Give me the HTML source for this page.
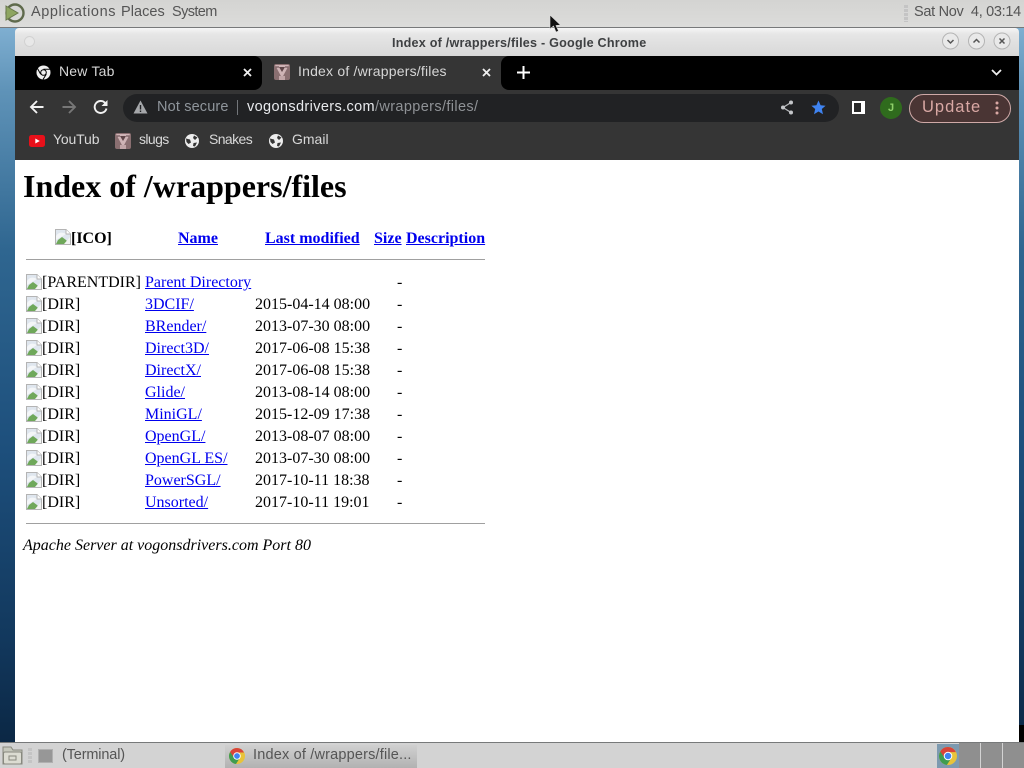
<!DOCTYPE html>
<html>
<head>
<meta charset="utf-8">
<title>Index of /wrappers/files</title>
<style>
html,body{margin:0;padding:0;width:1024px;height:768px;overflow:hidden;background:#1d4f7c}
#bg{position:absolute;left:0;top:0;width:1024px;height:768px;background:linear-gradient(180deg,#8dbbdc 0,#5f93b8 90px,#2f6690 250px,#1d4f7c 450px,#12385d 640px,#0b2744 745px)}
.a{position:absolute;white-space:nowrap}
.ui{font-family:"Liberation Sans",sans-serif}
.s{font-family:"Liberation Serif",serif;font-size:16px;line-height:22px;color:#000}
.l{color:#0000ee;text-decoration:underline}
.h{color:#d8d8d8;font-size:14px;line-height:18px}
svg{position:absolute;overflow:visible}
</style>
</head>
<body>
<div id="bg"></div>

<!-- top panel -->
<div class="a" style="left:0;top:0;width:1024px;height:27px;background:linear-gradient(180deg,#d4d4d2,#dcdcda);border-bottom:1px solid #77797a"></div>
<svg style="left:3px;top:2px" width="23" height="21" viewBox="0 0 23 21">
<circle cx="12" cy="11" r="8.500" fill="none" stroke="#5f6a4c" stroke-width="2.400"/>
<path d="M3 4L15 11L3 18Z" fill="#8ea561" stroke="#68784b" stroke-width="1"/>
</svg>
<div class="a ui" style="left:31px;top:3px;font-size:14.500px;line-height:18px;color:#555;letter-spacing:.57px">Applications</div>
<div class="a ui" style="left:121px;top:3px;font-size:14.500px;line-height:18px;color:#555;letter-spacing:.05px">Places</div>
<div class="a ui" style="left:172px;top:3px;font-size:14.500px;line-height:18px;color:#555;letter-spacing:-.6px">System</div>
<div class="a" style="left:904px;top:5px;width:4px;height:17px;background:repeating-linear-gradient(180deg,#c4c4c4 0,#c4c4c4 3px,#d8d8d8 3px,#d8d8d8 4px)"></div>
<div class="a ui" style="left:914px;top:3px;font-size:14.500px;line-height:18px;color:#555;letter-spacing:-.3px">Sat Nov&nbsp; 4, 03:14</div>

<!-- cursor -->
<svg style="left:549px;top:14px;z-index:5" width="13" height="20" viewBox="0 0 13 20">
<path d="M1 1L1 15L4.500 12L7 18L9.500 17L7 11.500L11.500 11Z" fill="#111" stroke="#ddd" stroke-width=".6"/>
</svg>

<!-- window -->
<div class="a" style="left:15px;top:28px;width:1004px;height:28px;background:linear-gradient(180deg,#f6f6f6 0,#e6e6e6 6px,#d8d8d8 28px);border-radius:4px 4px 0 0"></div>
<div class="a" style="left:24px;top:36px;width:11px;height:11px;border-radius:50%;background:#e8e8e8;border:1px solid #d2d2d2;box-sizing:border-box"></div>
<div class="a ui" style="left:392px;top:34px;font-size:12.600px;font-weight:bold;line-height:18px;color:#3e4042;letter-spacing:.22px">Index of /wrappers/files - Google Chrome</div>
<svg style="left:940px;top:31px" width="72" height="20" viewBox="0 0 72 20">
<g fill="#e9e9e9" stroke="#b4b4b4"><circle cx="10.500" cy="10" r="8"/><circle cx="36.500" cy="10" r="8"/><circle cx="62" cy="10" r="8"/></g>
<g fill="none" stroke="#555" stroke-width="1.500"><path d="M7.500 9L10.500 12L13.500 9"/><path d="M33.500 11.500L36.500 8.500L39.500 11.500"/><path d="M59.500 7.500L64.500 12.500M64.500 7.500L59.500 12.500"/></g>
</svg>

<!-- tab strip -->
<div class="a" style="left:15px;top:56px;width:1004px;height:34px;background:#353535"></div>
<div class="a" style="left:15px;top:56px;width:247px;height:34px;background:#000;border-radius:0 8px 8px 0"></div>
<div class="a" style="left:501px;top:56px;width:518px;height:34px;background:#000;border-radius:8px 0 0 8px"></div>
<svg style="left:36px;top:65px" width="15" height="15" viewBox="0 0 15 15">
<circle cx="7.500" cy="7.500" r="7" fill="#f0f0f0"/><circle cx="7.500" cy="7.500" r="3.300" fill="#000"/><circle cx="7.500" cy="7.500" r="2.300" fill="#f0f0f0"/>
<path d="M7.500 4.200H14M4.700 9.200L1.500 3.500M10.300 9.200L7 14.500" stroke="#000" stroke-width="1"/>
</svg>
<div class="a ui" style="left:59px;top:62px;font-size:14px;line-height:18px;color:#d6d6d6;letter-spacing:.2px">New Tab</div>
<svg style="left:243px;top:68px" width="9" height="9" viewBox="0 0 9 9"><path d="M1 1L8 8M8 1L1 8" stroke="#f0f0f0" stroke-width="1.800"/></svg>

<svg style="left:274px;top:64px" width="16" height="16" viewBox="0 0 16 16">
<rect width="16" height="16" rx="2" fill="#8a6f71"/><path d="M1 1L8 14L15 1Z" fill="#cfb4b6"/><path d="M5 3L8 8L11 3Z" fill="#5f4649"/><path d="M2 3H5M11 3H14" stroke="#5f4649"/><rect x="5" y="12" width="6" height="4" fill="#c2a6a8"/>
</svg>
<div class="a ui" style="left:298px;top:62px;font-size:14px;line-height:18px;color:#d6d6d6;letter-spacing:.2px">Index of /wrappers/files</div>
<svg style="left:482px;top:68px" width="9" height="9" viewBox="0 0 9 9"><path d="M1 1L8 8M8 1L1 8" stroke="#f0f0f0" stroke-width="1.800"/></svg>
<svg style="left:517px;top:66px" width="13" height="13" viewBox="0 0 13 13"><path d="M6.500 0V13M0 6.500H13" stroke="#fff" stroke-width="2"/></svg>
<svg style="left:991px;top:69px" width="11" height="7" viewBox="0 0 11 7"><path d="M1 1L5.500 5.500L10 1" fill="none" stroke="#eee" stroke-width="1.800"/></svg>

<!-- toolbar -->
<div class="a" style="left:15px;top:90px;width:1004px;height:70px;background:#353535"></div>
<svg style="left:29px;top:99px" width="16" height="16" viewBox="0 0 16 16"><path d="M14.500 8H2M8 2L2 8L8 14" fill="none" stroke="#f2f2f2" stroke-width="1.900"/></svg>
<svg style="left:61px;top:99px" width="16" height="16" viewBox="0 0 16 16"><path d="M1.500 8H14M8 2L14 8L8 14" fill="none" stroke="#777" stroke-width="1.900"/></svg>
<svg style="left:93px;top:99px" width="16" height="16" viewBox="0 0 16 16"><path d="M13.500 9.500A6 6 0 1 1 12 3.800" fill="none" stroke="#f2f2f2" stroke-width="1.900"/><path d="M14.500 1V7H8.500Z" fill="#f2f2f2"/></svg>

<div class="a" style="left:123px;top:94px;width:716px;height:28px;border-radius:14px;background:#212224"></div>
<svg style="left:133px;top:100px" width="15" height="14" viewBox="0 0 15 14"><path d="M7.500 .5L14.500 13.500H.5Z" fill="#a5a7aa"/><path d="M7.500 5V9.500M7.500 10.500V12" stroke="#202124" stroke-width="1.400"/></svg>
<div class="a ui" style="left:157px;top:98px;font-size:14.500px;line-height:18px;color:#8f959b;letter-spacing:.15px">Not secure</div>
<div class="a" style="left:237px;top:100px;width:1px;height:15px;background:#73767a"></div>
<div class="a ui" style="left:247px;top:98px;font-size:14.500px;line-height:18px;color:#e8eaed;letter-spacing:.37px">vogonsdrivers.com<span style="color:#8f9296">/wrappers/files/</span></div>
<svg style="left:780px;top:100px" width="14" height="15" viewBox="0 0 14 15"><path d="M11 2.500L3 7.500L11 12.500" fill="none" stroke="#b5b7ba" stroke-width="1.300"/><circle cx="11" cy="2.500" r="2" fill="#c4c6c9"/><circle cx="3" cy="7.500" r="2" fill="#c4c6c9"/><circle cx="11" cy="12.500" r="2" fill="#c4c6c9"/></svg>
<svg style="left:811px;top:100px" width="15" height="15" viewBox="0 0 15 15"><path d="M7.500 .5L9.600 5.200L14.600 5.700L10.800 9L12 14.200L7.500 11.500L3 14.200L4.200 9L.4 5.700L5.400 5.200Z" fill="#3f83f0"/></svg>
<div class="a" style="left:852px;top:101px;width:13px;height:13px;background:linear-gradient(90deg,#2a2a2a 0,#2a2a2a 7px,#fff 7px);border:2px solid #fff;box-sizing:border-box"></div>
<div class="a ui" style="left:880px;top:97px;width:22px;height:22px;border-radius:50%;background:#2f6b1d;color:#8fd16a;font-size:11px;font-weight:bold;line-height:22px;text-align:center">J</div>
<div class="a" style="left:909px;top:94px;width:102px;height:29px;box-sizing:border-box;border:1px solid #cfa9a7;border-radius:15px;background:#4a3534"></div>
<div class="a ui" style="left:922px;top:97px;font-size:16.500px;line-height:20px;color:#d9a8a4;letter-spacing:1px">Update</div>
<svg style="left:995px;top:101px" width="4" height="14" viewBox="0 0 4 14"><g fill="#d9a8a4"><circle cx="2" cy="2" r="1.500"/><circle cx="2" cy="7" r="1.500"/><circle cx="2" cy="12" r="1.500"/></g></svg>

<!-- bookmarks -->
<svg style="left:29px;top:135px" width="16" height="12" viewBox="0 0 16 12"><rect width="16" height="12" rx="2.500" fill="#e8101a"/><path d="M6.300 3.500L10.800 6L6.300 8.500Z" fill="#fff"/></svg>
<div class="a ui h" style="left:53px;top:130px;letter-spacing:-.15px">YouTub</div>
<svg style="left:115px;top:133px" width="16" height="16" viewBox="0 0 16 16">
<rect width="16" height="16" rx="2" fill="#8a6f71"/><path d="M1 1L8 14L15 1Z" fill="#cfb4b6"/><path d="M5 3L8 8L11 3Z" fill="#5f4649"/><path d="M2 3H5M11 3H14" stroke="#5f4649"/><rect x="5" y="12" width="6" height="4" fill="#c2a6a8"/>
</svg>
<div class="a ui h" style="left:139px;top:130px;letter-spacing:-.6px">slugs</div>
<svg style="left:185px;top:134px" width="14" height="14" viewBox="0 0 14 14"><circle cx="7" cy="7" r="7" fill="#ededed"/><path d="M1 4.500L5 5.500L6 8.500L3.500 10L1.500 8Z M9 1.500L12.500 3.500L10 6L8 4Z M8.500 9L12 8.500L10 12.500L8 12Z" fill="#353535"/></svg>
<div class="a ui h" style="left:209px;top:130px;letter-spacing:-.6px">Snakes</div>
<svg style="left:269px;top:134px" width="14" height="14" viewBox="0 0 14 14"><circle cx="7" cy="7" r="7" fill="#ededed"/><path d="M1 4.500L5 5.500L6 8.500L3.500 10L1.500 8Z M9 1.500L12.500 3.500L10 6L8 4Z M8.500 9L12 8.500L10 12.500L8 12Z" fill="#353535"/></svg>
<div class="a ui h" style="left:292px;top:130px">Gmail</div>

<!-- page -->
<div class="a" style="left:15px;top:160px;width:1004px;height:582px;background:#fff"></div>
<div class="a" style="left:23px;top:168px;font-family:'Liberation Serif',serif;font-size:32px;font-weight:bold;line-height:37px;color:#000">Index of /wrappers/files</div>

<svg width="0" height="0" style="position:absolute"><defs>
<g id="b"><path d="M.5 .5H11L15.500 5V15.500H.5Z" fill="#dfe6ee" stroke="#b4b4b4"/><path d="M11 .5V5H15.500" fill="#fff" stroke="#b4b4b4"/><path d="M1 15L3 11L7 8L11 11L15 15Z" fill="#6fa85a"/><path d="M1 7C4 3 7 3 11 5L1 11Z" fill="#f4f6f8"/><path d="M9 15L15 8V15Z" fill="#f2f4f2"/></g>
</defs></svg>

<svg style="left:55px;top:229px" width="16" height="16"><use href="#b"/></svg>
<div class="a s" style="left:71px;top:228px;font-weight:bold">[ICO]</div>
<div class="a s l" style="left:178px;top:228px;font-weight:bold">Name</div>
<div class="a s l" style="left:265px;top:228px;font-weight:bold">Last modified</div>
<div class="a s l" style="left:374px;top:228px;font-weight:bold">Size</div>
<div class="a s l" style="left:406px;top:228px;font-weight:bold">Description</div>
<div class="a" style="left:26px;top:259px;width:459px;height:1px;background:#a0a0a0"></div>

<svg style="left:26px;top:274px" width="16" height="16"><use href="#b"/></svg>
<div class="a s" style="left:42px;top:272px">[PARENTDIR]</div>
<div class="a s l" style="left:145px;top:272px">Parent Directory</div>
<div class="a s" style="left:397px;top:272px">-</div>

<svg style="left:26px;top:296px" width="16" height="16"><use href="#b"/></svg>
<div class="a s" style="left:42px;top:294px">[DIR]</div>
<div class="a s l" style="left:145px;top:294px">3DCIF/</div>
<div class="a s" style="left:255px;top:294px">2015-04-14 08:00</div>
<div class="a s" style="left:397px;top:294px">-</div>

<svg style="left:26px;top:318px" width="16" height="16"><use href="#b"/></svg>
<div class="a s" style="left:42px;top:316px">[DIR]</div>
<div class="a s l" style="left:145px;top:316px">BRender/</div>
<div class="a s" style="left:255px;top:316px">2013-07-30 08:00</div>
<div class="a s" style="left:397px;top:316px">-</div>

<svg style="left:26px;top:340px" width="16" height="16"><use href="#b"/></svg>
<div class="a s" style="left:42px;top:338px">[DIR]</div>
<div class="a s l" style="left:145px;top:338px">Direct3D/</div>
<div class="a s" style="left:255px;top:338px">2017-06-08 15:38</div>
<div class="a s" style="left:397px;top:338px">-</div>

<svg style="left:26px;top:362px" width="16" height="16"><use href="#b"/></svg>
<div class="a s" style="left:42px;top:360px">[DIR]</div>
<div class="a s l" style="left:145px;top:360px">DirectX/</div>
<div class="a s" style="left:255px;top:360px">2017-06-08 15:38</div>
<div class="a s" style="left:397px;top:360px">-</div>

<svg style="left:26px;top:384px" width="16" height="16"><use href="#b"/></svg>
<div class="a s" style="left:42px;top:382px">[DIR]</div>
<div class="a s l" style="left:145px;top:382px">Glide/</div>
<div class="a s" style="left:255px;top:382px">2013-08-14 08:00</div>
<div class="a s" style="left:397px;top:382px">-</div>

<svg style="left:26px;top:406px" width="16" height="16"><use href="#b"/></svg>
<div class="a s" style="left:42px;top:404px">[DIR]</div>
<div class="a s l" style="left:145px;top:404px">MiniGL/</div>
<div class="a s" style="left:255px;top:404px">2015-12-09 17:38</div>
<div class="a s" style="left:397px;top:404px">-</div>

<svg style="left:26px;top:428px" width="16" height="16"><use href="#b"/></svg>
<div class="a s" style="left:42px;top:426px">[DIR]</div>
<div class="a s l" style="left:145px;top:426px">OpenGL/</div>
<div class="a s" style="left:255px;top:426px">2013-08-07 08:00</div>
<div class="a s" style="left:397px;top:426px">-</div>

<svg style="left:26px;top:450px" width="16" height="16"><use href="#b"/></svg>
<div class="a s" style="left:42px;top:448px">[DIR]</div>
<div class="a s l" style="left:145px;top:448px">OpenGL ES/</div>
<div class="a s" style="left:255px;top:448px">2013-07-30 08:00</div>
<div class="a s" style="left:397px;top:448px">-</div>

<svg style="left:26px;top:472px" width="16" height="16"><use href="#b"/></svg>
<div class="a s" style="left:42px;top:470px">[DIR]</div>
<div class="a s l" style="left:145px;top:470px">PowerSGL/</div>
<div class="a s" style="left:255px;top:470px">2017-10-11 18:38</div>
<div class="a s" style="left:397px;top:470px">-</div>

<svg style="left:26px;top:494px" width="16" height="16"><use href="#b"/></svg>
<div class="a s" style="left:42px;top:492px">[DIR]</div>
<div class="a s l" style="left:145px;top:492px">Unsorted/</div>
<div class="a s" style="left:255px;top:492px">2017-10-11 19:01</div>
<div class="a s" style="left:397px;top:492px">-</div>

<div class="a" style="left:26px;top:523px;width:459px;height:1px;background:#a0a0a0"></div>
<div class="a s" style="left:23px;top:535px;font-style:italic">Apache Server at vogonsdrivers.com Port 80</div>

<!-- bottom panel -->
<div class="a" style="left:1019px;top:725px;width:5px;height:18px;background:#000"></div>
<div class="a" style="left:0;top:742px;width:1024px;height:26px;background:#d3d3d3;border-top:1px solid #77797a;box-sizing:border-box"></div>
<svg style="left:2px;top:746px" width="21" height="19" viewBox="0 0 21 19"><path d="M1 1H9L11 4H20V18H1Z" fill="#c6c8bc" stroke="#88897f"/><rect x="1.500" y="6" width="18" height="12" rx="1.500" fill="#dcdcd2" stroke="#88897f"/><rect x="7" y="10" width="7" height="4" fill="none" stroke="#88897f"/></svg>
<div class="a" style="left:28px;top:748px;width:4px;height:16px;background:repeating-linear-gradient(180deg,#c4c4c4 0,#c4c4c4 3px,#d4d4d4 3px,#d4d4d4 4px)"></div>
<div class="a" style="left:38px;top:749px;width:15px;height:14px;background:#979797;border:1px solid #b0b0b0;box-sizing:border-box"></div>
<div class="a ui" style="left:62px;top:746px;font-size:14.500px;line-height:18px;color:#555;letter-spacing:-.15px">(Terminal)</div>
<div class="a" style="left:225px;top:745px;width:192px;height:23px;background:linear-gradient(180deg,#d0d0d0,#b2b2b2)"></div>
<svg style="left:229px;top:748px" width="16" height="16" viewBox="0 0 16 16"><circle cx="8" cy="8" r="8" fill="#e8c33a"/><path d="M8 0A8 8 0 0 0 1.100 4L4.500 10L8 4.500H15A8 8 0 0 0 8 0Z" fill="#d8443a"/><path d="M1.100 4A8 8 0 0 0 7 16L10.500 10.500L5 9.500Z" fill="#3f9c4f"/><circle cx="8" cy="8" r="3.800" fill="#fff"/><circle cx="8" cy="8" r="2.900" fill="#3f83f0"/></svg>
<div class="a ui" style="left:253px;top:746px;font-size:14.500px;line-height:18px;color:#555;letter-spacing:.18px">Index of /wrappers/file...</div>
<div class="a" style="left:937px;top:744px;width:22px;height:24px;background:#7d9ab0"></div>
<svg style="left:939px;top:747px" width="18" height="18" viewBox="0 0 16 16"><circle cx="8" cy="8" r="8" fill="#e8c33a"/><path d="M8 0A8 8 0 0 0 1.100 4L4.500 10L8 4.500H15A8 8 0 0 0 8 0Z" fill="#d8443a"/><path d="M1.100 4A8 8 0 0 0 7 16L10.500 10.500L5 9.500Z" fill="#3f9c4f"/><circle cx="8" cy="8" r="3.800" fill="#fff"/><circle cx="8" cy="8" r="2.900" fill="#3f83f0"/></svg>
<div class="a" style="left:959px;top:743px;width:65px;height:25px;background:#8f8f8f"></div>
<div class="a" style="left:980px;top:743px;width:1px;height:25px;background:#d3d3d3"></div>
<div class="a" style="left:1002px;top:743px;width:1px;height:25px;background:#d3d3d3"></div>
</body>
</html>
